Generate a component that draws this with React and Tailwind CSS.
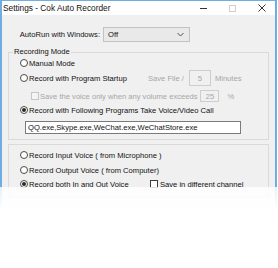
import React from "react";

function Radio({ checked }) {
  return (
    <span className="w-[8px] h-[8px] rounded-full border border-[#4a4a4a] bg-white flex items-center justify-center shrink-0">
      {checked && <span className="w-[4px] h-[4px] rounded-full bg-[#2a2a2a]" />}
    </span>
  );
}

function Check({ disabled }) {
  return (
    <span
      className={
        "w-[8px] h-[8px] border shrink-0 " +
        (disabled ? "border-[#c6c6c6] bg-[#f4f4f4]" : "border-[#3c3c3c] bg-white")
      }
    />
  );
}

export default function App() {
  return (
    <div className="w-[278px] h-[268px] bg-white relative overflow-hidden font-['Liberation_Sans',Arial,sans-serif] text-[7.6px] leading-[9px] text-[#111]">
      <div className="w-[277px] h-[215px] border-x-2 border-t border-[#6eaee2] flex flex-col">
        {/* title bar */}
        <div className="h-[14px] bg-white flex items-center shrink-0">
          <span className="ml-[1px] text-[8.3px] leading-[10px] text-[#111]">Settings - Cok Auto Recorder</span>
          <div className="ml-auto flex items-center h-full">
            <span className="w-[7px] h-[1px] bg-[#333] mr-[22px]" />
            <span className="w-[7px] h-[7px] border border-[#cfcfcf] mr-[22px]" />
            <svg width="8" height="8" viewBox="0 0 8 8" className="mr-[9px]">
              <path d="M0.5 0.5 L7.5 7.5 M7.5 0.5 L0.5 7.5" stroke="#333" strokeWidth="1" />
            </svg>
          </div>
        </div>
        {/* body */}
        <div className="flex-1 bg-[#f0f0f0] flex flex-col">
          <div className="mt-[12px] h-[15px] flex items-center">
            <span className="w-[98px] text-right">AutoRun with Windows:</span>
            <div className="ml-[3px] w-[87px] h-[15px] border border-[#c2c2c2] bg-[#e9e9e9] flex items-center px-[4px]">
              <span>Off</span>
              <svg width="7" height="5" viewBox="0 0 7 5" className="ml-auto mr-[1px]">
                <path d="M0.5 1 L3.5 4 L6.5 1" stroke="#555" strokeWidth="1" fill="none" />
              </svg>
            </div>
          </div>

          {/* group 1 */}
          <div className="relative mt-[10px] mx-[6px] border border-[#dadada] pl-[11px] pr-[4px] pt-[4px] pb-[5px] flex flex-col">
            <span className="absolute left-[4px] top-[-6px] px-[1px] bg-[#f0f0f0]">Recording Mode</span>
            <div className="h-[12px] flex items-center gap-[1px]">
              <Radio />
              <span>Manual Mode</span>
            </div>
            <div className="mt-[1px] h-[16px] flex items-center">
              <div className="w-[128px] flex items-center gap-[1px] shrink-0">
                <Radio />
                <span>Record with Program Startup</span>
              </div>
              <span className="text-[#a6a6a6]">Save File /</span>
              <div className="ml-[5px] w-[22px] h-[16px] border border-[#cdcdcd] flex items-center justify-center text-[#a6a6a6]">5</div>
              <span className="ml-[4px] text-[#a6a6a6]">Minutes</span>
            </div>
            <div className="mt-[4px] h-[12px] flex items-center pl-[11px]">
              <Check disabled />
              <span className="ml-[1px] text-[#a6a6a6]">Save the voice only when any volume exceeds</span>
              <div className="ml-[3px] w-[19px] h-[12px] border border-[#cdcdcd] flex items-center justify-center text-[#a6a6a6]">25</div>
              <span className="ml-[8px] text-[#a6a6a6]">%</span>
            </div>
            <div className="mt-[2px] h-[12px] flex items-center gap-[1px]">
              <Radio checked />
              <span>Record with Following Programs Take Voice/Video Call</span>
            </div>
            <div className="mt-[5px] ml-[5px] w-[216px] h-[13px] border border-[#7a7a7a] bg-white flex items-center px-[2px]">
              <span>QQ.exe,Skype.exe,WeChat.exe,WeChatStore.exe</span>
            </div>
          </div>

          {/* group 2 */}
          <div className="mt-[4px] mx-[6px] border border-[#dadada] pl-[11px] pt-[4px] pb-[6px] flex flex-col">
            <div className="h-[12px] flex items-center gap-[1px]">
              <Radio />
              <span>Record Input Voice ( from Microphone )</span>
            </div>
            <div className="mt-[3px] h-[12px] flex items-center gap-[1px]">
              <Radio />
              <span>Record Output Voice ( from Computer)</span>
            </div>
            <div className="mt-[2px] h-[12px] flex items-center">
              <div className="w-[130px] flex items-center gap-[1px] shrink-0">
                <Radio checked />
                <span>Record both In and Out Voice</span>
              </div>
              <Check />
              <span className="ml-[2px]">Save in different channel</span>
            </div>
          </div>
        </div>
      </div>
      {/* fade overlay */}
      <div className="absolute left-0 right-0 top-[187px] bottom-0 bg-gradient-to-b from-[rgba(255,255,255,0.82)] to-white to-[30%]" />
    </div>
  );
}
